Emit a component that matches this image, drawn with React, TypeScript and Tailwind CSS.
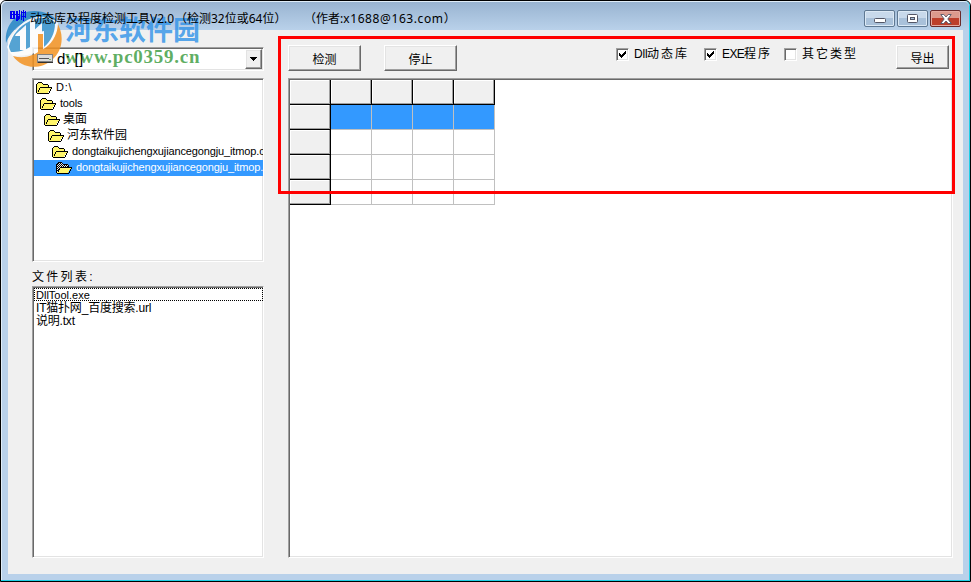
import React from 'react';

const RAISED = 'border border-t-white border-l-white border-r-[#696969] border-b-[#696969] shadow-[inset_-1px_-1px_0_#a0a0a0,inset_1px_1px_0_#e3e3e3] bg-[#f0f0f0]';
const SUNKEN = 'border border-t-[#a0a0a0] border-l-[#a0a0a0] border-r-white border-b-white shadow-[inset_1px_1px_0_#696969,inset_-1px_-1px_0_#e3e3e3] bg-white';

const folders = [
  { name: 'D:\\', pad: 'pl-[2px]', text: 'tracking-[0.7px]' },
  { name: 'tools', pad: 'pl-[6px]', text: 'tracking-[-0.2px]' },
  { name: '桌面', pad: 'pl-[10px]', text: 'text-[12px] -ml-px' },
  { name: '河东软件园', pad: 'pl-[14px]', text: 'text-[12px] -ml-px' },
  { name: 'dongtaikujichengxujiancegongju_itmop.com', pad: 'pl-[18px]', text: 'tracking-[-0.13px]' },
  { name: 'dongtaikujichengxujiancegongju_itmop.com', pad: 'pl-[22px]', text: 'tracking-[-0.13px]', selected: true },
];

const files = ['DllTool.exe', 'IT猫扑网_百度搜索.url', '说明.txt'];

const filters = [
  { latin: 'Dll', label: '动态库', checked: true, width: 'w-[88px]' },
  { latin: 'EXE', label: '程序', checked: true, width: 'w-[80px]' },
  { latin: '', label: '其它类型', checked: false, width: 'w-[80px]' },
];

const FolderIcon = ({ selected }: { selected?: boolean }) => (
  <svg width="16" height="12" viewBox="0 0 16 12" shapeRendering="crispEdges" className="mr-[4px] shrink-0">
    <defs>
      <pattern id="darkDither" width="2" height="2" patternUnits="userSpaceOnUse">
        <rect width="2" height="2" fill="#000" />
        <rect width="1" height="1" fill="#e8e8e8" />
        <rect x="1" y="1" width="1" height="1" fill="#e8e8e8" />
      </pattern>
    </defs>
    <path d="M1 11V2h1V1h4v1h1v1h5v3h3l-3 5z" fill={selected ? 'url(#darkDither)' : '#fff56a'} />
    <path d="M4 6h11l-3 5H1z" fill="#fff56a" />
    <path d="M0 2h1v9H0zM1 1h1v1H1zM2 0h4v1H2zM6 1h1v1H6zM7 2h5v1H7zM12 3h1v2h-1zM4 5h12v1H4zM3 6h1v2H3zM2 8h1v2H2zM15 6h1v1h-1zM14 7h1v2h-1zM13 9h1v2h-1zM1 11h12v1H1z" fill="#000" />
  </svg>
);

const DriveIcon = () => (
  <svg width="16" height="10" viewBox="0 0 16 10" shapeRendering="crispEdges" className="relative z-10 shrink-0">
    <rect width="16" height="9" fill="#808080" />
    <rect x="1" y="1" width="14" height="6" fill="#dcdcdc" />
    <rect x="2" y="4" width="10" height="1" fill="#555" />
    <rect x="12" y="5" width="2" height="1" fill="#7fb56a" />
    <rect x="1" y="8" width="15" height="1" fill="#333" />
  </svg>
);

const CheckBox = ({ checked }: { checked: boolean }) => (
  <span className={`size-[13px] shrink-0 ${SUNKEN}`}>
    {checked && (
      <svg width="11" height="11" viewBox="0 0 11 11" shapeRendering="crispEdges">
        <path d="M2 4h1v3H2zM3 5h1v3H3zM4 6h1v3H4zM5 5h1v3H5zM6 4h1v3H6zM7 3h1v3H7zM8 2h1v3H8z" fill="#000" />
      </svg>
    )}
  </span>
);

const Button = ({ children, className }: { children: React.ReactNode; className: string }) => (
  <button className={`flex items-center justify-center pt-[3px] text-[12px] leading-none ${RAISED} ${className}`}>{children}</button>
);

const AppIcon = () => (
  <svg width="17" height="13" viewBox="0 0 17 13" className="shrink-0" fill="#0000f0" shapeRendering="crispEdges">
    <path d="M0 1h2v8H0zM3 1h2v8H3zM0 1h4v1H0zM0 4h4v1H0zM0 8h4v1H0zM6 1h2v10H6zM9 0h1v9H9zM5 4h5v1H5zM8 6h1v4H8zM11 1h1v9h-1zM15 1h1v7h-1zM13 0h1v11h-1zM11 2h5v1h-5zM11 6h5v1h-5z" />
  </svg>
);

const Watermark = () => (
  <div className="pointer-events-none absolute left-[3px] top-[8px] flex">
    <svg width="60" height="60" viewBox="0 0 60 60" className="shrink-0 opacity-85">
      <path d="M2 34C0 15 14 2 30 2c11 0 19 4 24 11-9-5-20-6-28-2C13 16 6 24 2 34z" fill="#2687c6" />
      <path d="M9 47C26 52 46 42 52 12c9 13 7 30-4 39-13 11-31 8-39-4z" fill="#f39322" />
      <path d="M3 38C10 19 20 10 33 8c10-1 17 2 21 6-1 20-15 33-45 33-3-3-5-6-6-9z" fill="#fff" />
      <path d="M5 37C9 24 15 18 26 12v26c-6 4-12 5-19 5-1-2-2-4-2-6z" fill="#3b96cf" />
      <path d="M31 24V10c11-3 18 0 20 4 0 10-4 18-11 24V22z" fill="#3b96cf" />
      <path d="M12 25l10-9v25h-6V27h-5zM28 23l10-9v28h-6V25h-5z" fill="#fff" />
      <path d="M34 25h5v23c-5 3-10 4-14 3 5-1 8-3 9-7z" fill="#f39322" />
    </svg>
    <div className="ml-[1px] flex flex-col whitespace-nowrap">
      <span className="mt-[4px] h-[32px] font-['Noto_Sans_CJK_SC',sans-serif] text-[27px] leading-[32px] font-bold text-[#2c91e8]/80">河东软件园</span>
      <span className="mt-px font-['Liberation_Serif',serif] text-[19px] leading-[22px] font-bold tracking-[0.75px] text-[#43a047]/85">www.pc0359.cn</span>
    </div>
  </div>
);

const WindowButtons = () => (
  <div className="flex gap-[2px]">
    <span className="flex h-[17px] w-[31px] items-center justify-center rounded-[2px] border border-[#5f7892] bg-linear-to-b from-[#c8d9eb] from-50% to-[#a9c1da] to-50% shadow-[inset_0_0_0_1px_#dce9f5]">
      <svg width="12" height="5" viewBox="0 0 12 5" className="mt-[4px]"><rect x=".5" y=".5" width="11" height="4" rx="1" fill="#fff" stroke="#535666" /></svg>
    </span>
    <span className="flex h-[17px] w-[31px] items-center justify-center rounded-[2px] border border-[#5f7892] bg-linear-to-b from-[#c8d9eb] from-50% to-[#a9c1da] to-50% shadow-[inset_0_0_0_1px_#dce9f5]">
      <svg width="11" height="9" viewBox="0 0 11 9" fill="#fff" stroke="#535666"><rect x=".5" y=".5" width="10" height="8" rx="1" /><rect x="3.5" y="3.5" width="4" height="2" fill="#a9c1da" /></svg>
    </span>
    <span className="flex h-[17px] w-[31px] items-center justify-center rounded-[2px] border border-[#6b2a2a] bg-linear-to-b from-[#dc9a8d] from-45% to-[#bd3f2b] to-50% shadow-[inset_0_0_0_1px_#e5aaa0]">
      <svg width="12" height="10" viewBox="0 0 12 10"><path d="M.8 .5h3L6 3 8.200.5h3L7.800 5l3.400 4.500h-3L6 7 3.800 9.500h-3L4.200 5z" fill="#fff" stroke="#535666" strokeWidth=".9" /></svg>
    </span>
  </div>
);

const Grid = () => (
  <div className="grid w-[205px] grid-cols-[repeat(5,41px)] grid-rows-[repeat(5,25px)]">
    {Array.from({ length: 25 }, (_, i) => {
      const row = Math.floor(i / 5);
      const col = i % 5;
      if (row === 0 || col === 0) {
        return (
          <div key={i} className="border-r border-b border-black bg-[#f0f0f0]">
            <div className="size-full shadow-[inset_-1px_-1px_0_#a0a0a0,inset_1px_1px_0_#fff]" />
          </div>
        );
      }
      return <div key={i} className={`border-r border-b border-[#c0c0c0] ${row === 1 ? 'bg-[#3399ff]' : 'bg-white'}`} />;
    })}
  </div>
);

export default function App() {
  return (
    <div className="relative flex h-[582px] w-[971px] flex-col overflow-hidden rounded-t-[6px] border border-black bg-[#b9d1ea] font-['Liberation_Sans','Noto_Sans_CJK_SC',sans-serif] text-[12px] text-black">
      <div className="flex h-[580px] flex-col rounded-t-[5px] border-r border-b border-[#1fd0e6] bg-[#b9d1ea] pb-[6px] pl-[7px] pr-[6px] shadow-[inset_1px_1px_0_#e0edf8]">
        <header className="-mx-[6px] mt-px flex h-[28px] shrink-0 items-start justify-between rounded-t-[5px] bg-linear-to-b from-[#99b4d1] to-[#b9d1ea] pl-[8px] pr-[8px] pt-[8px]">
          <div className="relative z-10 flex font-['Noto_Sans','Noto_Sans_CJK_SC',sans-serif]">
            <AppIcon />
            <h1 className="ml-[3px] flex leading-[18px] whitespace-pre">
              <span className="w-[120px]">动态库及程度检测工具</span>
              <span className="w-[25px]">V2.0</span>
              <span className="w-[129px]">（检测32位或64位）</span>
              <span>（作者:<span className="tracking-[0.6px]">x1688@163.com</span>）</span>
            </h1>
          </div>
          <WindowButtons />
        </header>

        <main className="flex h-[544px] w-[955px] gap-[24px] bg-[#f0f0f0] pl-[24px]">
          <aside className="flex w-[232px] flex-col">
            <div className={`mt-[17px] flex h-[24px] items-center pl-[4px] ${SUNKEN}`}>
              <DriveIcon />
              <span className="relative z-10 mb-px ml-[4px] flex-1 text-[15px] leading-none tracking-[0.3px]">d: []</span>
              <span className={`mr-px flex h-[20px] w-[17px] items-center justify-center ${RAISED}`}>
                <svg width="7" height="4" viewBox="0 0 7 4" shapeRendering="crispEdges"><path d="M0 0h7v1H0zM1 1h5v1H1zM2 2h3v1H2zM3 3h1v1H3z" /></svg>
              </span>
            </div>

            <ul className={`mt-[7px] h-[184px] overflow-hidden pt-px pl-px text-[11px] ${SUNKEN}`}>
              {folders.map((f, i) => (
                <li key={i} className={`flex h-[16px] items-center overflow-hidden whitespace-nowrap ${f.pad} ${f.selected ? 'bg-[#3399ff] text-white' : ''}`}>
                  <FolderIcon selected={f.selected} />
                  <span className={`mb-[2px] leading-[14px] ${f.text}`}>{f.name}</span>
                </li>
              ))}
            </ul>

            <p className="mt-[6px] h-[18px] text-[12px] leading-[18px] tracking-[2.300px]">文件列表:</p>

            <ul className={`h-[272px] pt-px pl-px ${SUNKEN}`}>
              {files.map((name, i) => (
                <li key={name} className={`pl-[2px] whitespace-nowrap ${i === 0 ? 'h-[13px] text-[11px] leading-[15px] outline-1 -outline-offset-1 outline-dotted outline-black' : 'h-[13px] text-[12px] leading-[15px] tracking-[-0.2px]'}`}>{name}</li>
              ))}
            </ul>
          </aside>

          <section className="flex w-[665px] flex-col">
            <div className="flex h-[48px] items-start pt-[15px]">
              <Button className="h-[26px] w-[73px]">检测</Button>
              <Button className="ml-[23px] h-[26px] w-[73px]">停止</Button>
              <div className="ml-[159px] mt-[2px] flex">
                {filters.map((f) => (
                  <label key={f.label} className={`flex h-[14px] items-center gap-[5px] whitespace-nowrap ${f.width}`}>
                    <CheckBox checked={f.checked} />
                    <span className="flex leading-[14px]">
                      {f.latin && <span className={f.latin === 'Dll' ? 'w-[13px] tracking-[-0.2px]' : 'w-[22px] tracking-[-0.6px]'}>{f.latin}</span>}
                      <span className="tracking-[2px]">{f.label}</span>
                    </span>
                  </label>
                ))}
              </div>
              <Button className="ml-auto mr-[4px] h-[24px] w-[53px]">导出</Button>
            </div>
            <div className={`h-[480px] pt-px pl-px ${SUNKEN}`}>
              <Grid />
            </div>
          </section>
        </main>
      </div>

      <Watermark />
      <div className="pointer-events-none absolute left-[277px] top-[35px] h-[158px] w-[677px] border-[3px] border-[#ff0000]" />
    </div>
  );
}
